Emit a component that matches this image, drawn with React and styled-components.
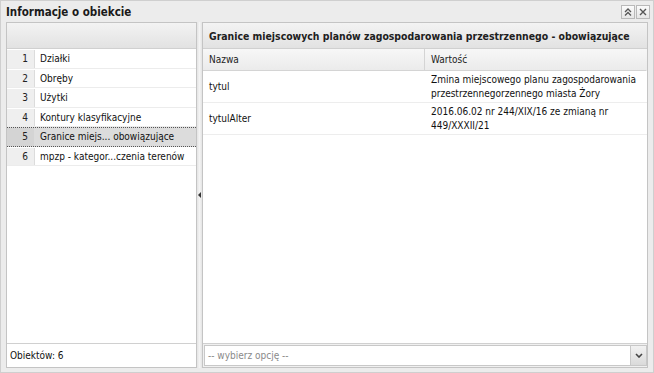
import { Fragment } from 'react'
import styled, { createGlobalStyle } from 'styled-components'

const Global = createGlobalStyle`
  html, body {
    margin: 0;
    padding: 0;
    background: #ececec;
  }
  body {
    font-family: 'DejaVu Sans Condensed', 'DejaVu Sans', sans-serif;
    font-size: 10px;
    color: #000;
  }
`

const Window = styled.div`
  width: 654px;
  height: 373px;
  box-sizing: border-box;
  display: flex;
  flex-direction: column;
  background: #ececec;
  border: 1px solid #cfcfcf;
`

const TitleBar = styled.div`
  height: 21px;
  flex: none;
  display: flex;
  align-items: center;
  justify-content: space-between;
  padding: 0 3px 0 5px;
`

const Title = styled.div`
  font-weight: bold;
  font-size: 11.5px;
  color: #1a1a1a;
  padding-top: 1px;
`

const Tools = styled.div`
  display: flex;
  gap: 1px;
`

const ToolButton = styled.div`
  width: 14px;
  height: 14px;
  box-sizing: border-box;
  border: 1px solid #b9b9b9;
  background: linear-gradient(#fbfbfb, #e6e6e6);
  display: flex;
  align-items: center;
  justify-content: center;
`

const Body = styled.div`
  flex: 1;
  display: flex;
  min-height: 0;
  padding: 0 5px 4px 5px;
`

const Panel = styled.div`
  display: flex;
  flex-direction: column;
  box-sizing: border-box;
  border: 1px solid #c4c4c4;
  background: #fff;
  ${({ $width }) => ($width ? `width: ${$width}px; flex: none;` : 'flex: 1;')}
`

const PanelHeader = styled.div`
  height: 26px;
  flex: none;
  box-sizing: border-box;
  border-bottom: 1px solid #d0d0d0;
  background: linear-gradient(#f3f3f3, #e2e2e2);
  display: flex;
  align-items: center;
  padding-left: 6px;
  font-weight: bold;
  font-size: 10.4px;
  white-space: nowrap;
  color: #202020;
`

const List = styled.div`
  flex: 1;
  display: flex;
  flex-direction: column;
`

const Row = styled.div`
  height: 19.5px;
  display: flex;
  box-sizing: border-box;
  background: ${({ $selected }) => ($selected ? '#dcdcdc' : '#fff')};
  border-top: 1px ${({ $selected }) => ($selected ? 'dotted #555' : 'solid transparent')};
  border-bottom: 1px ${({ $selected }) => ($selected ? 'dotted #555' : 'solid #ececec')};
`

const NumCell = styled.div`
  width: 28px;
  flex: none;
  box-sizing: border-box;
  text-align: right;
  padding-right: 6px;
  line-height: 17.5px;
  background: ${({ $selected }) => ($selected ? '#d4d4d4' : '#efefef')};
  border-right: 1px solid #dcdcdc;
  color: #222;
`

const NameCell = styled.div`
  flex: 1;
  padding-left: 5px;
  line-height: 17.5px;
  white-space: nowrap;
  overflow: hidden;
  color: #111;
`

const Footer = styled.div`
  height: 24px;
  flex: none;
  box-sizing: border-box;
  border-top: 1px solid #d0d0d0;
  display: flex;
  align-items: center;
  padding-left: 3px;
  color: #111;
`

const Splitter = styled.div`
  width: 5px;
  flex: none;
  display: flex;
  align-items: center;
  justify-content: center;
  background: linear-gradient(90deg, #e4e4e4, #f4f4f4, #e4e4e4);
`

const Table = styled.div`
  display: grid;
  grid-template-columns: 222px 1fr;
`

const HeadCell = styled.div`
  height: 22px;
  box-sizing: border-box;
  display: flex;
  align-items: center;
  padding-left: 6px;
  background: linear-gradient(#f7f7f7, #ebebeb);
  border-bottom: 1px solid #d4d4d4;
  border-right: 1px solid ${({ $last }) => ($last ? 'transparent' : '#d4d4d4')};
  color: #222;
`

const Cell = styled.div`
  height: 32px;
  box-sizing: border-box;
  display: flex;
  align-items: center;
  padding: 0 6px;
  border-bottom: 1px solid #ededed;
  line-height: 14px;
  white-space: nowrap;
  color: #111;
`

const Filler = styled.div`
  flex: 1;
`

const SelectBar = styled.div`
  height: 24px;
  flex: none;
  box-sizing: border-box;
  border-top: 1px solid #d0d0d0;
  background: #f0f0f0;
  padding: 1px 0 1px 1px;
  display: flex;
`

const SelectInput = styled.div`
  flex: 1;
  box-sizing: border-box;
  border: 1px solid #c8c8c8;
  border-right: none;
  background: #fff;
  display: flex;
  align-items: center;
  padding-left: 3px;
  color: #8a8a8a;
`

const SelectArrow = styled.div`
  width: 17px;
  flex: none;
  box-sizing: border-box;
  border: 1px solid #c8c8c8;
  background: linear-gradient(#f2f2f2, #dadada);
  display: flex;
  align-items: center;
  justify-content: center;
`

const items = [
  'Działki',
  'Obręby',
  'Użytki',
  'Kontury klasyfikacyjne',
  'Granice miejs... obowiązujące',
  'mpzp - kategor...czenia terenów',
]

const rows = [
  ['tytul', ['Zmina miejscowego planu zagospodarowania', 'przestrzennegorzennego miasta Żory']],
  ['tytulAlter', ['2016.06.02 nr 244/XIX/16 ze zmianą nr', '449/XXXII/21']],
]

export default function App() {
  return (
    <>
      <Global />
      <Window>
        <TitleBar>
          <Title>Informacje o obiekcie</Title>
          <Tools>
            <ToolButton>
              <svg width="8" height="8" viewBox="0 0 8 8" fill="none" stroke="#555" strokeWidth="1.3">
                <path d="M1 4 L4 1 L7 4 M1 7.5 L4 4.5 L7 7.5" />
              </svg>
            </ToolButton>
            <ToolButton>
              <svg width="8" height="8" viewBox="0 0 8 8" fill="none" stroke="#555" strokeWidth="1.4">
                <path d="M1 1 L7 7 M7 1 L1 7" />
              </svg>
            </ToolButton>
          </Tools>
        </TitleBar>
        <Body>
          <Panel $width={191}>
            <PanelHeader />
            <List>
              {items.map((name, i) => (
                <Row key={name} $selected={i === 4}>
                  <NumCell $selected={i === 4}>{i + 1}</NumCell>
                  <NameCell>{name}</NameCell>
                </Row>
              ))}
            </List>
            <Footer>Obiektów: 6</Footer>
          </Panel>
          <Splitter>
            <svg width="3" height="6" viewBox="0 0 3 6">
              <path d="M3 0 L0 3 L3 6 Z" fill="#333" />
            </svg>
          </Splitter>
          <Panel>
            <PanelHeader>Granice miejscowych planów zagospodarowania przestrzennego - obowiązujące</PanelHeader>
            <Table>
              <HeadCell>Nazwa</HeadCell>
              <HeadCell $last>Wartość</HeadCell>
              {rows.map(([k, v]) => (
                <Fragment key={k}>
                  <Cell>{k}</Cell>
                  <Cell>
                    <div>
                      {v[0]}
                      <br />
                      {v[1]}
                    </div>
                  </Cell>
                </Fragment>
              ))}
            </Table>
            <Filler />
            <SelectBar>
              <SelectInput>-- wybierz opcję --</SelectInput>
              <SelectArrow>
                <svg width="8" height="5" viewBox="0 0 8 5" fill="none" stroke="#444" strokeWidth="1.6">
                  <path d="M1 1 L4 4 L7 1" />
                </svg>
              </SelectArrow>
            </SelectBar>
          </Panel>
        </Body>
      </Window>
    </>
  )
}
